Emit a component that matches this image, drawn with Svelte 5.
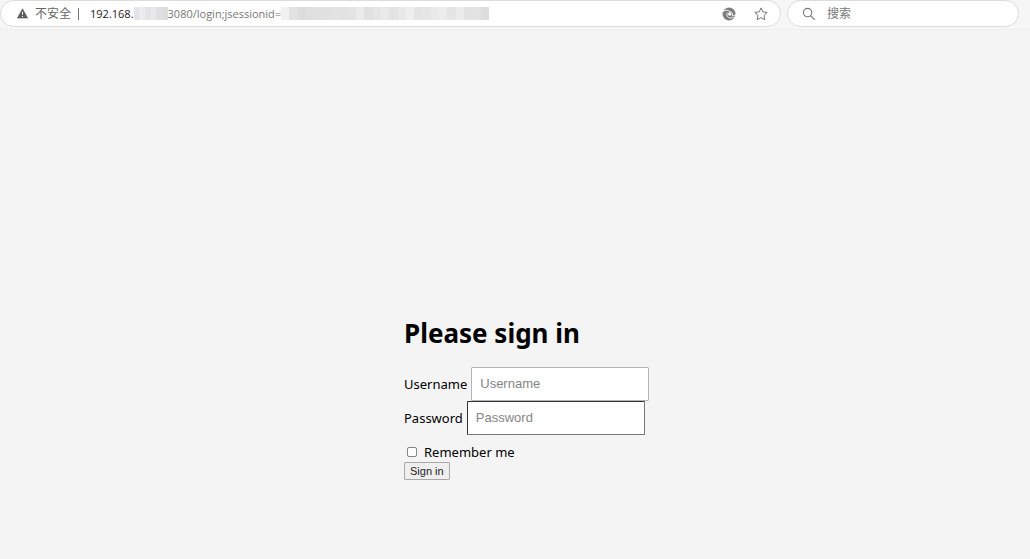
<script lang="ts">
	let username = '';
	let password = '';
	let remember = false;
	let query = '';

	// grey tiles that hide the private parts of the address
	const hostMask = ['#e2e4e8', '#ececee', '#e4e4e6', '#e9e9eb', '#dfe0e2', '#dcdcde'];
	const sessionMask = [
		'#f1f1f1', '#e2e2e2', '#dddddd', '#e0e0e0', '#e0e0e0', '#e1e1e1', '#e3e3e3', '#e2e2e2',
		'#e4e4e4', '#ebebeb', '#e1e1e1', '#e5e5e5', '#eaeaea', '#e3e3e3', '#e8e8e8', '#eeeeee',
		'#e4e4e4', '#e6e6e6', '#e9e9e9', '#ececec', '#e5e5e5', '#ebebeb', '#e2e2e2', '#e3e3e3',
		'#dddddd'
	];
</script>

<header>
	<div class="address">
		<svg class="warning" viewBox="0 0 12 12" aria-hidden="true">
			<path d="M6 .8 11.6 11H.4z" fill="#5c5c5c" stroke="#5c5c5c" stroke-width=".6" stroke-linejoin="round" />
			<path d="M6 4v3.4M6 8.6v1.2" stroke="#fff" stroke-width="1.1" />
		</svg>
		<span class="insecure">不安全</span>
		<span class="divider"></span>
		<div class="url">
			<span class="host">192.168.</span>
			<span class="mask host-mask">
				{#each hostMask as color}
					<i style="background: {color}"></i>
				{/each}
			</span>
			<span>3080/login;jsessionid=</span>
			<span class="mask session-mask">
				{#each sessionMask as color}
					<i style="background: {color}"></i>
				{/each}
			</span>
		</div>
		<button class="icon" aria-label="Edge">
			<svg viewBox="0 0 14 14">
				<circle cx="7" cy="7" r="6.5" fill="#7c7c7c" />
				<g fill="none" stroke="#fff" stroke-width=".9">
					<path d="M.4 5.4C2 2.8 6.2 2.4 8 5" />
					<path d="M8 5c2-.4 3.2 1.6 2 3.2 1.6.6 3 .2 4-.6" />
					<path d="M5.4 5.8C4 8 5.4 11 8.4 11c1.4 0 2.6-.4 3.6-1.2" />
				</g>
				<circle cx="7.8" cy="7" r="1.7" fill="#fff" />
			</svg>
		</button>
		<button class="icon" aria-label="Favorite">
			<svg viewBox="0 0 14 14">
				<path
					d="m7 .9 1.8 4 4.4.5-3.2 3 .9 4.4L7 10.6l-3.9 2.2.9-4.4-3.2-3 4.4-.5z"
					fill="none"
					stroke="#777"
					stroke-linejoin="round"
				/>
			</svg>
		</button>
	</div>
	<label class="search">
		<svg viewBox="0 0 14 14" aria-hidden="true">
			<circle cx="5.6" cy="5.6" r="4.2" fill="none" stroke="#777" stroke-width="1.1" />
			<path d="m8.8 8.8 4 4" stroke="#777" stroke-width="1.2" />
		</svg>
		<input type="text" placeholder="搜索" aria-label="搜索" bind:value={query} />
	</label>
</header>

<main>
	<form on:submit|preventDefault>
		<h1>Please sign in</h1>
		<div class="field">
			<label for="username">Username</label>
			<input id="username" type="text" placeholder="Username" bind:value={username} />
		</div>
		<div class="field">
			<label for="password">Password</label>
			<input id="password" type="password" placeholder="Password" bind:value={password} />
		</div>
		<label class="remember">
			<input type="checkbox" bind:checked={remember} />
			Remember me
		</label>
		<button class="submit" type="submit">Sign in</button>
	</form>
</main>

<style>
	:global(body) {
		margin: 0;
		background: #f4f4f4;
	}

	header {
		display: flex;
		gap: 6px;
		padding: 0 11px 2px 0;
		border-bottom: 1px solid #efefef;
		background: #f6f6f6;
		font: 12px/16px 'Open Sans', 'Noto Sans CJK SC', sans-serif;
		color: #777;
	}

	.address,
	.search {
		display: flex;
		align-items: center;
		box-sizing: border-box;
		height: 27px;
		border: 1px solid #dcdcdc;
		border-radius: 14px;
		background: #fff;
	}

	.address {
		flex: 1;
		min-width: 0;
		padding: 0 12px 0 16px;
	}

	.warning {
		width: 11px;
		height: 11px;
		margin-right: 7px;
	}

	.insecure {
		color: #666;
	}

	.divider {
		width: 1px;
		height: 12px;
		margin: 0 11px 0 7px;
		background: #777;
	}

	.url {
		display: flex;
		flex: 1;
		align-items: center;
		min-width: 0;
		font-size: 11px;
		white-space: nowrap;
	}

	.host {
		color: #222;
	}

	.mask {
		display: flex;
		height: 13px;
	}

	.mask i {
		flex: 1;
	}

	.host-mask {
		width: 34px;
	}

	.session-mask {
		width: 208px;
	}

	.icon {
		display: flex;
		margin-left: 18px;
		padding: 0;
		border: none;
		background: none;
	}

	.icon svg,
	.search svg {
		width: 14px;
		height: 14px;
	}

	.search {
		flex: 0 0 232px;
		padding: 0 14px;
	}

	.search input {
		flex: 1;
		min-width: 0;
		margin-left: 11px;
		padding: 0;
		border: none;
		outline: none;
		background: none;
		font: inherit;
	}

	.search input::placeholder {
		color: #777;
	}

	main {
		padding: 283px 0 48px;
	}

	form {
		box-sizing: border-box;
		width: 266px;
		margin: 0 auto;
		padding-left: 22px;
		font: 13px/20px 'Noto Sans', sans-serif;
		color: #000;
	}

	h1 {
		margin: 0 0 14px;
		font-size: 26px;
		line-height: 40px;
		font-weight: 700;
		color: #000;
		white-space: nowrap;
	}

	.field {
		display: flex;
		align-items: center;
		gap: 4px;
	}

	.field input {
		box-sizing: border-box;
		width: 178px;
		height: 34px;
		padding: 0 8px 2px;
		border: 1px solid #b5b5b5;
		border-radius: 1px;
		background: #fff;
		font: 13px 'Liberation Sans', sans-serif;
	}

	.field input::placeholder {
		color: #858585;
	}

	#password {
		border-color: #333 #777 #777 #333;
	}

	.remember {
		display: flex;
		align-items: center;
		gap: 7px;
		margin-top: 7px;
	}

	.remember input {
		appearance: none;
		width: 10px;
		height: 10px;
		margin: 0 0 0 3px;
		border: 1px solid #858585;
		border-radius: 2px;
		background: #fff;
		box-sizing: border-box;
	}

	.remember input:checked {
		background: #0075ff;
	}

	.submit {
		display: block;
		box-sizing: border-box;
		height: 18px;
		padding: 0 5px;
		border: 1px solid #a8a8a8;
		border-radius: 1px;
		background: #efefef;
		font: 11px/16px 'Liberation Sans', sans-serif;
		color: #222;
	}
</style>
